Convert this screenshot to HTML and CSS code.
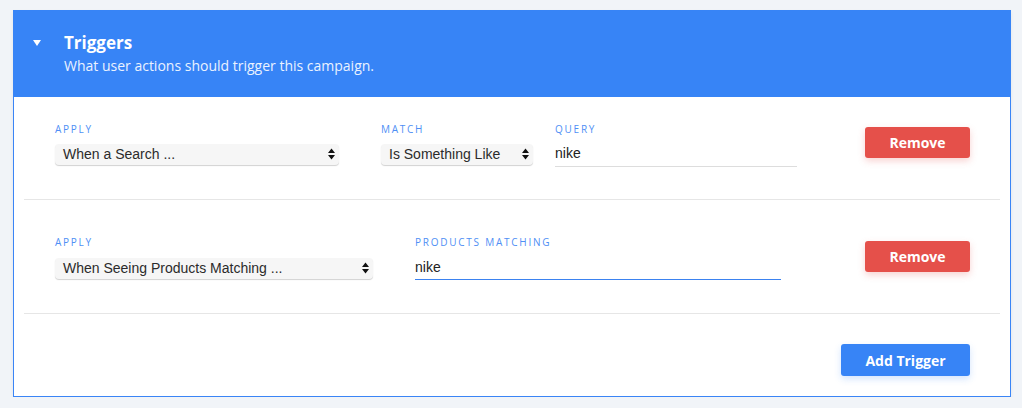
FILE: index.html
```html
<!DOCTYPE html>
<html>
<head>
<meta charset="utf-8">
<link rel="stylesheet" href="styles.css">
</head>
<body>
<div class="card">
  <div class="card-header">
    <span class="caret"></span>
    <div class="titles">
      <div class="title">Triggers</div>
      <div class="subtitle">What user actions should trigger this campaign.</div>
    </div>
  </div>
  <div class="row row-1">
    <div class="fields">
      <div class="field">
        <div class="label">APPLY</div>
        <div class="select sel-apply1">When a Search ...<svg class="arrows" width="7" height="12" viewBox="0 0 7 12"><path d="M3.5 0.5 L7 5 L0 5 Z M0 7 L7 7 L3.5 11.5 Z" fill="#111"/></svg></div>
      </div>
      <div class="field">
        <div class="label">MATCH</div>
        <div class="select sel-match">Is Something Like<svg class="arrows" width="7" height="12" viewBox="0 0 7 12"><path d="M3.5 0.5 L7 5 L0 5 Z M0 7 L7 7 L3.5 11.5 Z" fill="#111"/></svg></div>
      </div>
      <div class="field">
        <div class="label">QUERY</div>
        <div class="input inp-query">nike</div>
      </div>
    </div>
    <button class="btn btn-red">Remove</button>
  </div>
  <div class="row row-2">
    <div class="fields">
      <div class="field">
        <div class="label">APPLY</div>
        <div class="select sel-apply2">When Seeing Products Matching ...<svg class="arrows" width="7" height="12" viewBox="0 0 7 12"><path d="M3.5 0.5 L7 5 L0 5 Z M0 7 L7 7 L3.5 11.5 Z" fill="#111"/></svg></div>
      </div>
      <div class="field">
        <div class="label">PRODUCTS MATCHING</div>
        <div class="input inp-products focused">nike</div>
      </div>
    </div>
    <button class="btn btn-red">Remove</button>
  </div>
  <div class="footer">
    <button class="btn btn-blue">Add Trigger</button>
  </div>
</div>
</body>
</html>
```
FILE: styles.css
```css
html, body {
  margin: 0;
  padding: 0;
  background: #f1f4f8;
}
body {
  padding: 10px 11px 0 13px;
  font-family: "Open Sans", "Noto Sans", sans-serif;
}
.card {
  width: 996px;
  background: #ffffff;
  border: 1px solid #3a85f6;
  border-top: none;
  box-shadow: 0 2px 4px rgba(0, 0, 0, 0.06);
}
.card-header {
  background: #3784f6;
  height: 87px;
  margin: 0 -1px;
  display: flex;
  align-items: flex-start;
  box-sizing: border-box;
  padding: 22px 0 0 20px;
  color: #ffffff;
}
.caret {
  width: 0;
  height: 0;
  border-left: 4px solid transparent;
  border-right: 4px solid transparent;
  border-top: 6px solid #ffffff;
  margin-top: 8px;
}
.titles {
  margin-left: 23px;
}
.title {
  font-size: 17px;
  font-weight: 700;
  line-height: 22px;
}
.subtitle {
  margin-top: 2px;
  font-size: 14px;
  line-height: 20px;
  color: #eaf2ff;
}
.row {
  display: flex;
  align-items: flex-start;
  justify-content: space-between;
  margin: 0 10px;
  padding: 0 30px 0 31px;
  border-bottom: 1px solid #e6e6e6;
  box-sizing: border-box;
}
.row-1 {
  height: 103px;
  padding-top: 26px;
}
.row-2 {
  height: 114px;
  padding-top: 36px;
}
.fields {
  display: flex;
  align-items: flex-start;
}
.label {
  font-size: 10px;
  line-height: 12px;
  letter-spacing: 1.75px;
  color: #4f8ff5;
}
.row-1 .label { margin-bottom: 9px; }
.row-2 .label { margin-bottom: 10px; }
.select {
  position: relative;
  box-sizing: border-box;
  height: 21px;
  line-height: 20px;
  padding-left: 8px;
  background: #f6f6f6;
  border-radius: 4px;
  box-shadow: 0 1px 1px rgba(0, 0, 0, 0.18);
  font-family: "Liberation Sans", Arial, sans-serif;
  font-size: 14px;
  color: #2b2b2b;
}
.arrows {
  position: absolute;
  right: 4px;
  top: 4px;
}
.sel-apply1 { width: 284px; margin-right: 42px; }
.sel-match { width: 152px; margin-right: 22px; }
.sel-apply2 { width: 318px; margin-right: 42px; }
.input {
  box-sizing: border-box;
  height: 23px;
  line-height: 18px;
  border-bottom: 1px solid #dddddd;
  font-family: "Liberation Sans", Arial, sans-serif;
  font-size: 14px;
  color: #222222;
}
.inp-query { width: 242px; }
.inp-products { width: 366px; height: 22px; }
.input.focused { border-bottom-color: #3b82f0; }
.btn {
  border: none;
  border-radius: 3px;
  color: #ffffff;
  font-family: "Open Sans", "Noto Sans", sans-serif;
  font-weight: 700;
  font-size: 14px;
  padding: 0;
  cursor: pointer;
}
.btn-red {
  width: 105px;
  height: 31px;
  margin-top: 4px;
  background: #e5504a;
  box-shadow: 0 3px 7px rgba(229, 80, 74, 0.25);
}
.row-2 .btn-red { margin-top: 5px; }
.footer {
  display: flex;
  justify-content: flex-end;
  padding: 30px 40px 20px 0;
}
.btn-blue {
  width: 129px;
  height: 32px;
  background: #3784f6;
  box-shadow: 0 3px 7px rgba(55, 132, 246, 0.22);
}
```
